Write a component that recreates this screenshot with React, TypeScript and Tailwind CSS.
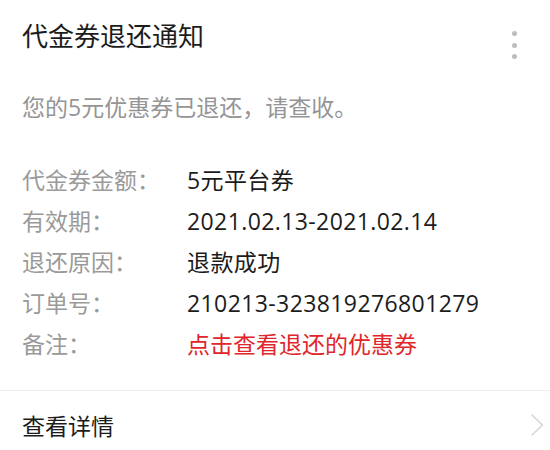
const ROWS: { label: string; value: string; red?: boolean }[] = [
  { label: "代金券金额：", value: "5元平台券" },
  { label: "有效期：", value: "2021.02.13-2021.02.14" },
  { label: "退还原因：", value: "退款成功" },
  { label: "订单号：", value: "210213-323819276801279" },
  { label: "备注：", value: "点击查看退还的优惠券", red: true },
];

export default function App() {
  return (
    <div
      className="h-[450px] w-[550px] overflow-hidden bg-white"
      style={{ fontFamily: '"Open Sans", "Noto Sans CJK SC", sans-serif' }}
    >
      <div className="relative px-[22px] pt-[20px]">
        <h1 className="text-[26px] leading-[32px] text-[#1c1c1c]">代金券退还通知</h1>
        {/* more menu */}
        <div className="absolute right-[33px] top-[31px] flex flex-col gap-[6.5px]">
          <span className="h-[5px] w-[5px] rounded-full bg-[#bdbdbd]" />
          <span className="h-[5px] w-[5px] rounded-full bg-[#bdbdbd]" />
          <span className="h-[5px] w-[5px] rounded-full bg-[#bdbdbd]" />
        </div>

        <p className="mt-[39px] text-[23px] leading-[32px] text-[#959595]">
          您的5元优惠券已退还，请查收。
        </p>

        <div className="mt-[37px] flex flex-col">
          {ROWS.map((r) => (
            <div key={r.label} className="flex h-[41px] items-center text-[23px]">
              <span className="w-[165px] shrink-0 text-[#9a9a9a]">{r.label}</span>
              <span className={r.red ? "text-[#e0262b]" : "tracking-[0.4px] text-[#1c1c1c]"}>{r.value}</span>
            </div>
          ))}
        </div>
      </div>

      <div className="mt-[25px] h-px bg-[#ececec]" />

      <div className="flex h-[70px] items-center justify-between pl-[22px] pr-[6px]">
        <span className="text-[23px] text-[#1c1c1c]">查看详情</span>
        <svg width="14" height="24" viewBox="0 0 14 24" fill="none" className="mt-[-2px]">
          <path d="M2 2 L12.5 12 L2 22" stroke="#d6d6d6" strokeWidth="1.6" strokeLinecap="round" strokeLinejoin="round" />
        </svg>
      </div>
    </div>
  );
}
